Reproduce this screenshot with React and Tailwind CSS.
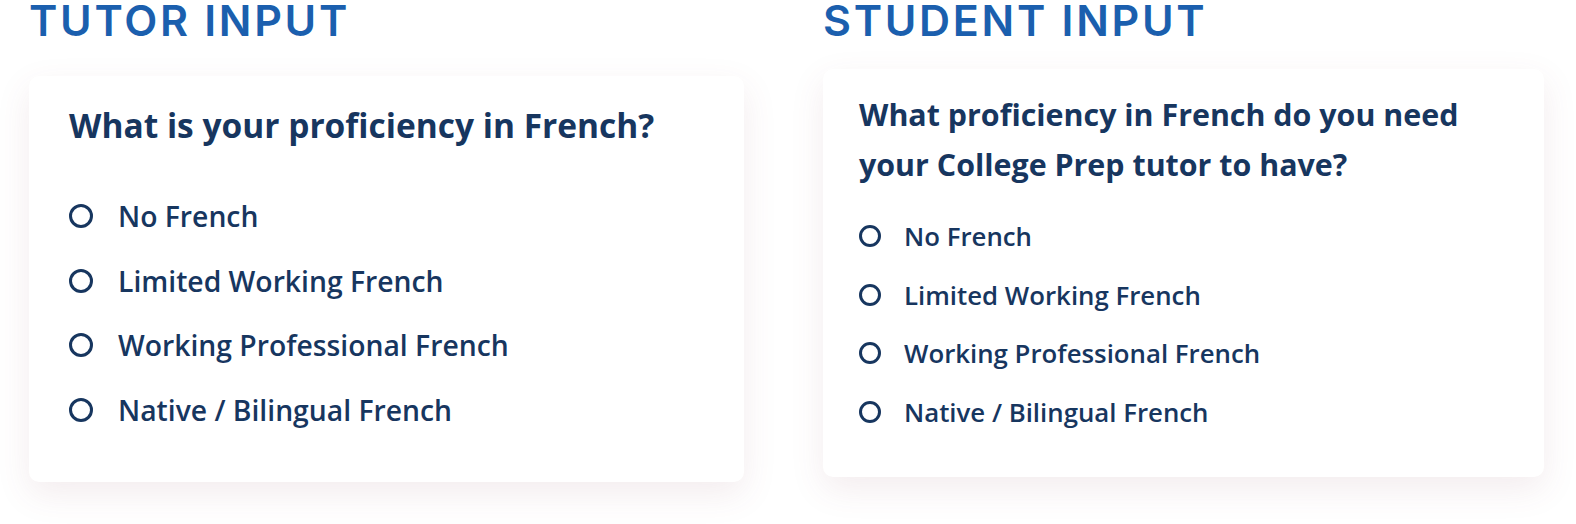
import React from 'react';

const options = [
    'No French',
    'Limited Working French',
    'Working Professional French',
    'Native / Bilingual French',
];

const Radio = ({ size }) => (
    <span
        className={`${size} shrink-0 rounded-full border-[3px] border-[#17365f] bg-white`}
    />
);

const App = () => {
    return (
        <div className="w-[1576px] h-[524px] bg-white flex font-['Open_Sans',sans-serif] text-[#17365f]">
            {/* TUTOR */}
            <section className="w-[794px] pl-[29px] pt-[2px] flex flex-col">
                <h1 className="font-['Inter',sans-serif] font-semibold text-[43px] leading-[36px] text-[#1b5fae] tracking-[2.7px]">
                    TUTOR INPUT
                </h1>
                <div className="mt-[38px] w-[715px] h-[406px] bg-white rounded-[10px] shadow-[0_12px_34px_rgba(140,70,90,0.10)] pl-[40px] pt-[27px]">
                    <h2 className="text-[33.5px] font-bold leading-[44px]">What is your proficiency in French?</h2>
                    <ul className="mt-[54px] flex flex-col gap-[34.5px]">
                        {options.map((o) => (
                            <li key={o} className="flex items-center gap-[25px] h-[30px]">
                                <Radio size="w-[24px] h-[24px]" />
                                <span className="text-[28.3px] font-semibold leading-[30px]">{o}</span>
                            </li>
                        ))}
                    </ul>
                </div>
            </section>

            {/* STUDENT */}
            <section className="flex flex-col pl-[29px] pt-[2px]">
                <h1 className="font-['Inter',sans-serif] font-semibold text-[43px] leading-[36px] text-[#1b5fae] tracking-[2.7px]">
                    STUDENT INPUT
                </h1>
                <div className="mt-[31px] w-[721px] h-[408px] bg-white rounded-[10px] shadow-[0_12px_34px_rgba(140,70,90,0.10)] pl-[36px] pt-[21px]">
                    <h2 className="text-[30.4px] font-bold leading-[50px] w-[620px]">
                        What proficiency in French do you need your College Prep tutor to have?
                    </h2>
                    <ul className="mt-[32px] flex flex-col gap-[30.7px]">
                        {options.map((o) => (
                            <li key={o} className="flex items-center gap-[23px] h-[28px]">
                                <Radio size="w-[22px] h-[22px]" />
                                <span className="text-[25.8px] font-semibold leading-[28px]">{o}</span>
                            </li>
                        ))}
                    </ul>
                </div>
            </section>
        </div>
    );
};

export default App;
